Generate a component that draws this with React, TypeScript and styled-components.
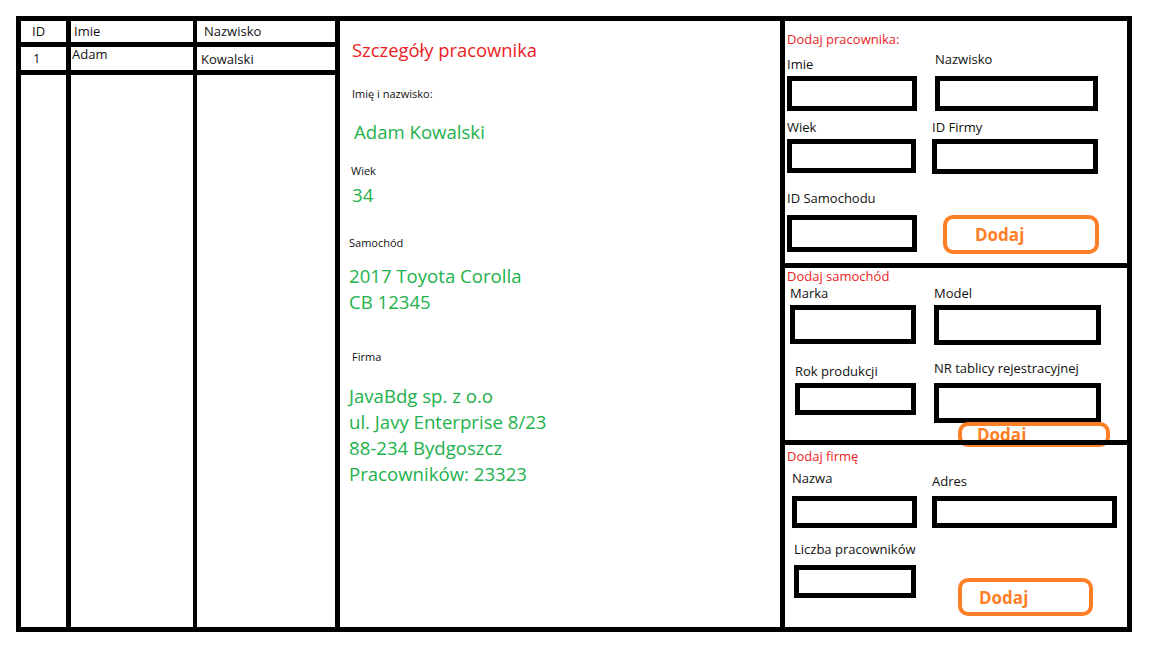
import styled, { createGlobalStyle } from "styled-components";

const GlobalStyle = createGlobalStyle`
  html, body {
    margin: 0;
    padding: 0;
    background: #fff;
  }
  body {
    font-family: "Open Sans", "Noto Sans", "DejaVu Sans", sans-serif;
    color: #111;
  }
`;

const App = () => {
    return (
        <>
            <GlobalStyle />
            <Page>
                <Frame>
                    <Table>
                        <Cell $pl={11}>ID</Cell>
                        <Cell $pl={3}>Imie</Cell>
                        <Cell $pl={7}>Nazwisko</Cell>
                        <Cell $pl={12} $row>1</Cell>
                        <Cell $pl={1} $row>
                            <CellText $dy={-4}>Adam</CellText>
                        </Cell>
                        <Cell $pl={4} $row>
                            <CellText $dy={1}>Kowalski</CellText>
                        </Cell>
                        <Cell />
                        <Cell />
                        <Cell />
                    </Table>

                    <Details>
                        <DetailsTitle>Szczegóły pracownika</DetailsTitle>
                        <DetailLabel $mt={23} $ml={3}>Imię i nazwisko:</DetailLabel>
                        <DetailValue $mt={17} $ml={5}>Adam Kowalski</DetailValue>
                        <DetailLabel $mt={18} $ml={2}>Wiek</DetailLabel>
                        <DetailValue $mt={3} $ml={3}>34</DetailValue>
                        <DetailLabel $mt={27}>Samochód</DetailLabel>
                        <DetailValue $mt={12}>
                            2017 Toyota Corolla
                            <br />
                            CB 12345
                        </DetailValue>
                        <DetailLabel $mt={34} $ml={3}>Firma</DetailLabel>
                        <DetailValue $mt={18}>
                            JavaBdg sp. z o.o
                            <br />
                            ul. Javy Enterprise 8/23
                            <br />
                            88-234 Bydgoszcz
                            <br />
                            Pracowników: 23323
                        </DetailValue>
                    </Details>

                    <Forms>
                        <Section $h={242} $pt={10}>
                            <SectionTitle>Dodaj pracownika:</SectionTitle>
                            <FieldRow $mt={8}>
                                <Field $ml={0}>
                                    <FieldLabel>Imie</FieldLabel>
                                    <Input readOnly $w={130} $h={35} />
                                </Field>
                                <Field $ml={3}>
                                    <FieldLabel $lift={5}>Nazwisko</FieldLabel>
                                    <Input readOnly $w={163} $h={35} />
                                </Field>
                            </FieldRow>
                            <FieldRow $mt={7}>
                                <Field $ml={0}>
                                    <FieldLabel>Wiek</FieldLabel>
                                    <Input readOnly $w={129} $h={34} />
                                </Field>
                                <Field $ml={0}>
                                    <FieldLabel>ID Firmy</FieldLabel>
                                    <Input readOnly $w={166} $h={35} />
                                </Field>
                            </FieldRow>
                            <FieldRow $mt={20}>
                                <Field $ml={0}>
                                    <FieldLabel $lift={5}>ID Samochodu</FieldLabel>
                                    <Input readOnly $w={130} $h={37} />
                                </Field>
                                <AddButton $ml={11} $mt={21} $w={156} $h={39} $pl={28}>
                                    Dodaj
                                </AddButton>
                            </FieldRow>
                        </Section>

                        <Section $h={177} $pt={0}>
                            <SectionTitle>Dodaj samochód</SectionTitle>
                            <FieldRow $mt={0}>
                                <Field $ml={3}>
                                    <FieldLabel>Marka</FieldLabel>
                                    <Input readOnly $w={126} $h={39} />
                                </Field>
                                <Field $ml={2}>
                                    <FieldLabel>Model</FieldLabel>
                                    <Input readOnly $w={167} $h={40} />
                                </Field>
                            </FieldRow>
                            <FieldRow $mt={17}>
                                <Field $ml={8}>
                                    <FieldLabel>Rok produkcji</FieldLabel>
                                    <Input readOnly $w={121} $h={32} />
                                </Field>
                                <Field $ml={2}>
                                    <FieldLabel $lift={3}>NR tablicy rejestracyjnej</FieldLabel>
                                    <Input readOnly $w={167} $h={40} />
                                </Field>
                            </FieldRow>
                            <FieldRow $mt={0}>
                                <AddButton $col={2} $ml={26} $mt={-1} $w={152} $h={25} $pl={15}>
                                    Dodaj
                                </AddButton>
                            </FieldRow>
                        </Section>

                        <Section $pt={3}>
                            <SectionTitle>Dodaj firmę</SectionTitle>
                            <FieldRow $mt={11}>
                                <Field $ml={5}>
                                    <FieldLabel $lift={6}>Nazwa</FieldLabel>
                                    <Input readOnly $w={125} $h={32} />
                                </Field>
                                <Field $ml={0}>
                                    <FieldLabel $lift={3}>Adres</FieldLabel>
                                    <Input readOnly $w={185} $h={32} />
                                </Field>
                            </FieldRow>
                            <FieldRow $mt={16}>
                                <Field $ml={7}>
                                    <FieldLabel $lift={4}>Liczba pracowników</FieldLabel>
                                    <Input readOnly $w={122} $h={33} />
                                </Field>
                                <AddButton $ml={26} $mt={34} $w={135} $h={38} $pl={17}>
                                    Dodaj
                                </AddButton>
                            </FieldRow>
                        </Section>
                    </Forms>
                </Frame>
            </Page>
        </>
    );
};

const Page = styled.div`
    width: 1152px;
    height: 648px;
    padding: 16px 0 0 16px;
    box-sizing: border-box;
`;

const Frame = styled.div`
    width: 1116px;
    height: 616px;
    box-sizing: border-box;
    border: 5px solid #000;
    display: flex;
`;

const Table = styled.div`
    width: 314px;
    display: grid;
    grid-template-columns: 50px 126px 138px;
    grid-template-rows: 26px 28px 1fr;

    & > div:nth-child(3n + 1) {
        border-right: 5px solid #000;
    }
    & > div:nth-child(3n + 2) {
        border-right: 4px solid #000;
    }
    & > div:nth-child(-n + 6) {
        border-bottom: 5px solid #000;
    }
`;

const Cell = styled.div<{ $pl?: number; $row?: boolean }>`
    box-sizing: border-box;
    padding-left: ${({ $pl }) => $pl ?? 0}px;
    font-size: 13px;
    line-height: ${({ $row }) => ($row ? 23 : 21)}px;
    color: #111;
    white-space: nowrap;
`;

const CellText = styled.span<{ $dy: number }>`
    position: relative;
    top: ${({ $dy }) => $dy}px;
`;

const Details = styled.div`
    width: 445px;
    box-sizing: border-box;
    border-left: 5px solid #000;
    padding: 16px 0 0 9px;
    display: flex;
    flex-direction: column;
    align-items: flex-start;
`;

const DetailsTitle = styled.div`
    margin-left: 3px;
    font-size: 18.4px;
    line-height: 26px;
    color: #ed1c24;
`;

const DetailLabel = styled.div<{ $mt: number; $ml?: number }>`
    margin-top: ${({ $mt }) => $mt}px;
    margin-left: ${({ $ml }) => $ml ?? 0}px;
    font-size: 11px;
    line-height: 16px;
    color: #111;
`;

const DetailValue = styled.div<{ $mt: number; $ml?: number }>`
    margin-top: ${({ $mt }) => $mt}px;
    margin-left: ${({ $ml }) => $ml ?? 0}px;
    font-size: 18.6px;
    line-height: 26px;
    color: #22b14c;
`;

const Forms = styled.div`
    flex: 1;
    box-sizing: border-box;
    border-left: 5px solid #000;
    display: flex;
    flex-direction: column;
`;

const Section = styled.div<{ $h?: number; $pt: number }>`
    position: relative;
    box-sizing: border-box;
    ${({ $h }) => ($h ? `height: ${$h}px; flex: none;` : "flex: 1;")}
    padding: ${({ $pt }) => $pt}px 0 0 2px;

    & + & {
        border-top: 5px solid #000;
    }
`;

const SectionTitle = styled.div`
    font-size: 13px;
    line-height: 16px;
    color: #ed1c24;
`;

const FieldRow = styled.div<{ $mt: number }>`
    display: grid;
    grid-template-columns: 145px 1fr;
    align-items: start;
    margin-top: ${({ $mt }) => $mt}px;
`;

const Field = styled.div<{ $ml: number }>`
    display: flex;
    flex-direction: column;
    margin-left: ${({ $ml }) => $ml}px;
`;

const FieldLabel = styled.label<{ $lift?: number }>`
    font-size: 13px;
    line-height: 18px;
    margin-bottom: 3px;
    color: #111;
    white-space: nowrap;
    position: relative;
    top: -${({ $lift }) => $lift ?? 0}px;
`;

const Input = styled.input<{ $w: number; $h: number }>`
    box-sizing: border-box;
    width: ${({ $w }) => $w}px;
    height: ${({ $h }) => $h}px;
    border: 5px solid #000;
    padding: 0;
    margin: 0;
    background: #fff;
    outline: none;
`;

const AddButton = styled.button<{
    $ml: number;
    $mt: number;
    $w: number;
    $h: number;
    $pl: number;
    $col?: number;
}>`
    grid-column: ${({ $col }) => $col ?? "auto"};
    box-sizing: border-box;
    width: ${({ $w }) => $w}px;
    height: ${({ $h }) => $h}px;
    margin: ${({ $mt }) => $mt}px 0 0 ${({ $ml }) => $ml}px;
    padding: 0 0 0 ${({ $pl }) => $pl}px;
    border: 4px solid #ff7f27;
    border-radius: 10px;
    background: transparent;
    color: #ff7f27;
    font-family: "Open Sans", "Noto Sans", sans-serif;
    font-size: 17px;
    font-weight: 700;
    line-height: 1;
    text-align: left;
    cursor: pointer;
`;

export default App;
